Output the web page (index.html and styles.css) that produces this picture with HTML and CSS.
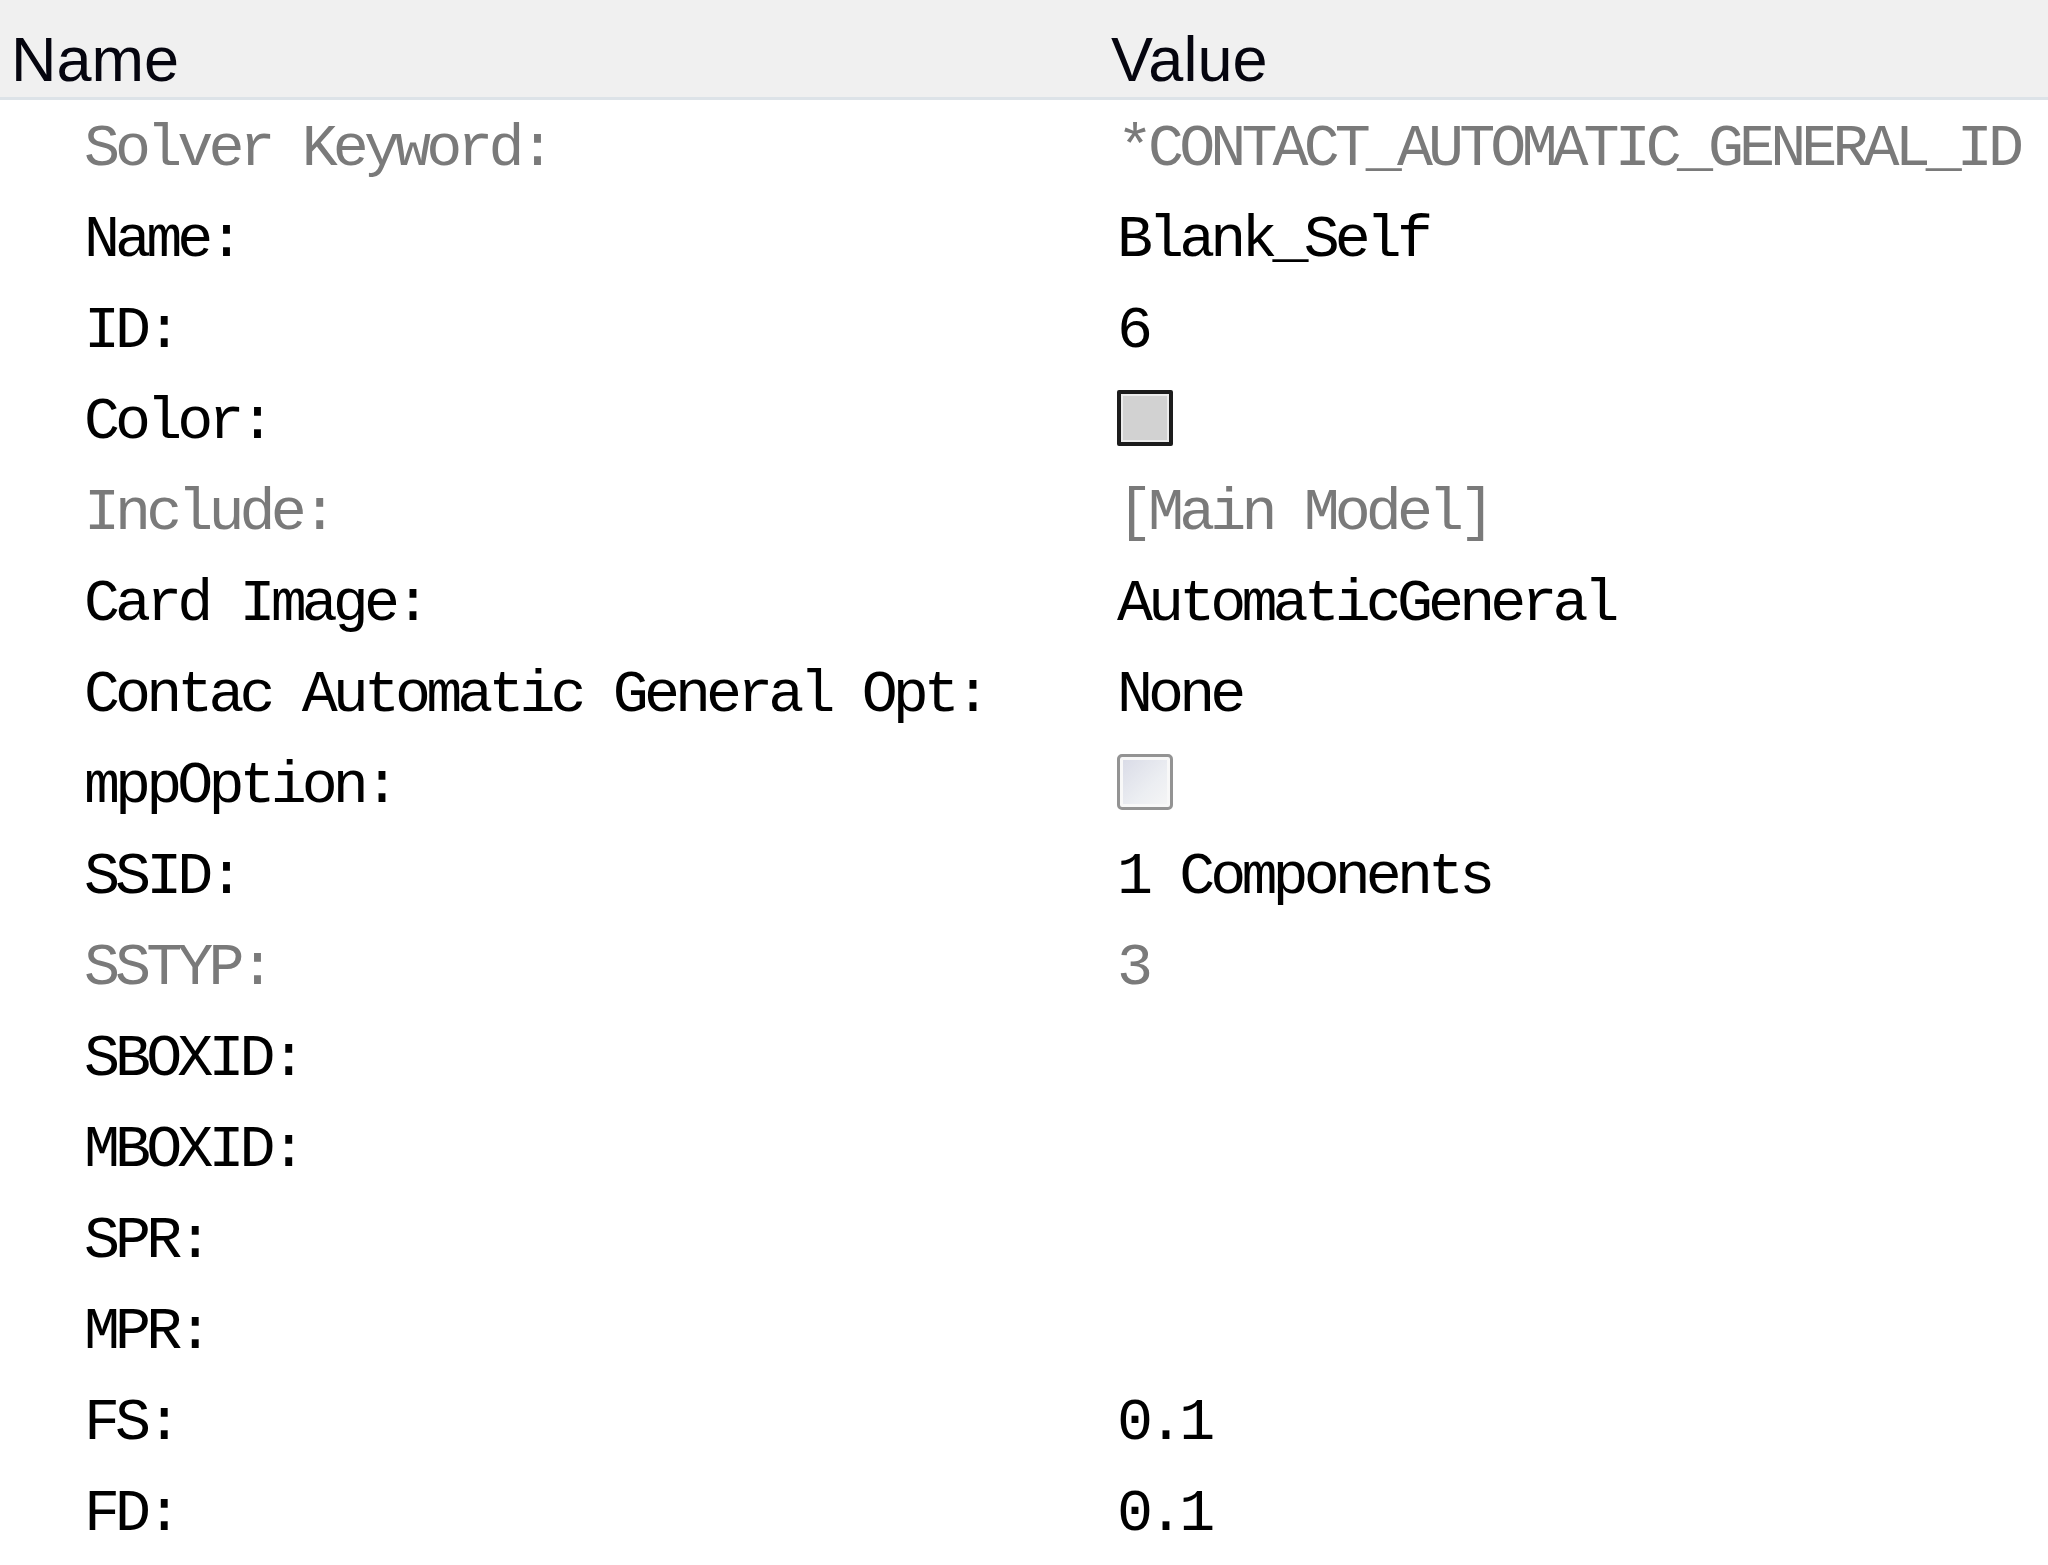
FILE: index.html
```html
<!DOCTYPE html>
<html>
<head>
<meta charset="utf-8">
<title>Properties</title>
<link rel="stylesheet" href="styles.css">
</head>
<body>
<div class="grid">
  <div class="head">
    <div class="hcell hname">Name</div>
    <div class="hcell hvalue">Value</div>
  </div>
  <div class="rows">
    <div class="row dim"><div class="label">Solver Keyword:</div><div class="value">*CONTACT_AUTOMATIC_GENERAL_ID</div></div>
    <div class="row"><div class="label">Name:</div><div class="value">Blank_Self</div></div>
    <div class="row"><div class="label">ID:</div><div class="value">6</div></div>
    <div class="row"><div class="label">Color:</div><div class="value"><span class="swatch"></span></div></div>
    <div class="row dim"><div class="label">Include:</div><div class="value">[Main Model]</div></div>
    <div class="row"><div class="label">Card Image:</div><div class="value">AutomaticGeneral</div></div>
    <div class="row"><div class="label">Contac Automatic General Opt:</div><div class="value">None</div></div>
    <div class="row"><div class="label">mppOption:</div><div class="value"><span class="check"></span></div></div>
    <div class="row"><div class="label">SSID:</div><div class="value">1 Components</div></div>
    <div class="row dim"><div class="label">SSTYP:</div><div class="value">3</div></div>
    <div class="row"><div class="label">SBOXID:</div><div class="value"></div></div>
    <div class="row"><div class="label">MBOXID:</div><div class="value"></div></div>
    <div class="row"><div class="label">SPR:</div><div class="value"></div></div>
    <div class="row"><div class="label">MPR:</div><div class="value"></div></div>
    <div class="row"><div class="label">FS:</div><div class="value">0.1</div></div>
    <div class="row"><div class="label">FD:</div><div class="value">0.1</div></div>
  </div>
</div>
</body>
</html>
```
FILE: styles.css
```css
html, body {
  margin: 0;
  padding: 0;
  background: #ffffff;
}
body {
  width: 2048px;
  height: 1565px;
  overflow: hidden;
}
.grid {
  display: flex;
  flex-direction: column;
}
.head {
  display: grid;
  grid-template-columns: 1100px 1fr;
  height: 97px;
  background: #f0f0f0;
  border-bottom: 3px solid #dde3e8;
  align-items: center;
}
.hcell {
  font-family: "Liberation Sans", Arial, sans-serif;
  font-size: 63px;
  color: #05050f;
  line-height: 1;
  padding-top: 22px;
}
.hname { padding-left: 11px; }
.hvalue { padding-left: 11px; }
.rows {
  padding-top: 2px;
  display: flex;
  flex-direction: column;
}
.row {
  display: grid;
  grid-template-columns: 1100px 1fr;
  height: 91px;
  align-items: center;
  font-family: "Liberation Mono", "Courier New", monospace;
  font-size: 60px;
  letter-spacing: -4.9px;
  color: #000000;
  white-space: pre;
}
.row > div { padding-top: 3px; }
.row.dim { color: #7a7a7a; }
.label { padding-left: 84px; }
.value {
  padding-left: 17px;
  display: flex;
  align-items: center;
}
.swatch {
  display: block;
  width: 48px;
  height: 48px;
  margin-top: -9px;
  border: 4px solid #1c1c1c;
  background: #d2d2d2;
  box-shadow: inset 0 0 0 2px #ececec;
  border-radius: 2px;
}
.check {
  display: block;
  width: 50px;
  height: 50px;
  margin-top: -9px;
  border: 3px solid #939393;
  border-radius: 5px;
  background: linear-gradient(135deg, #d8dae6 0%, #eceef2 60%, #f6f6f6 100%);
  box-shadow: inset 0 0 0 3px #f8f8f8;
}
```
